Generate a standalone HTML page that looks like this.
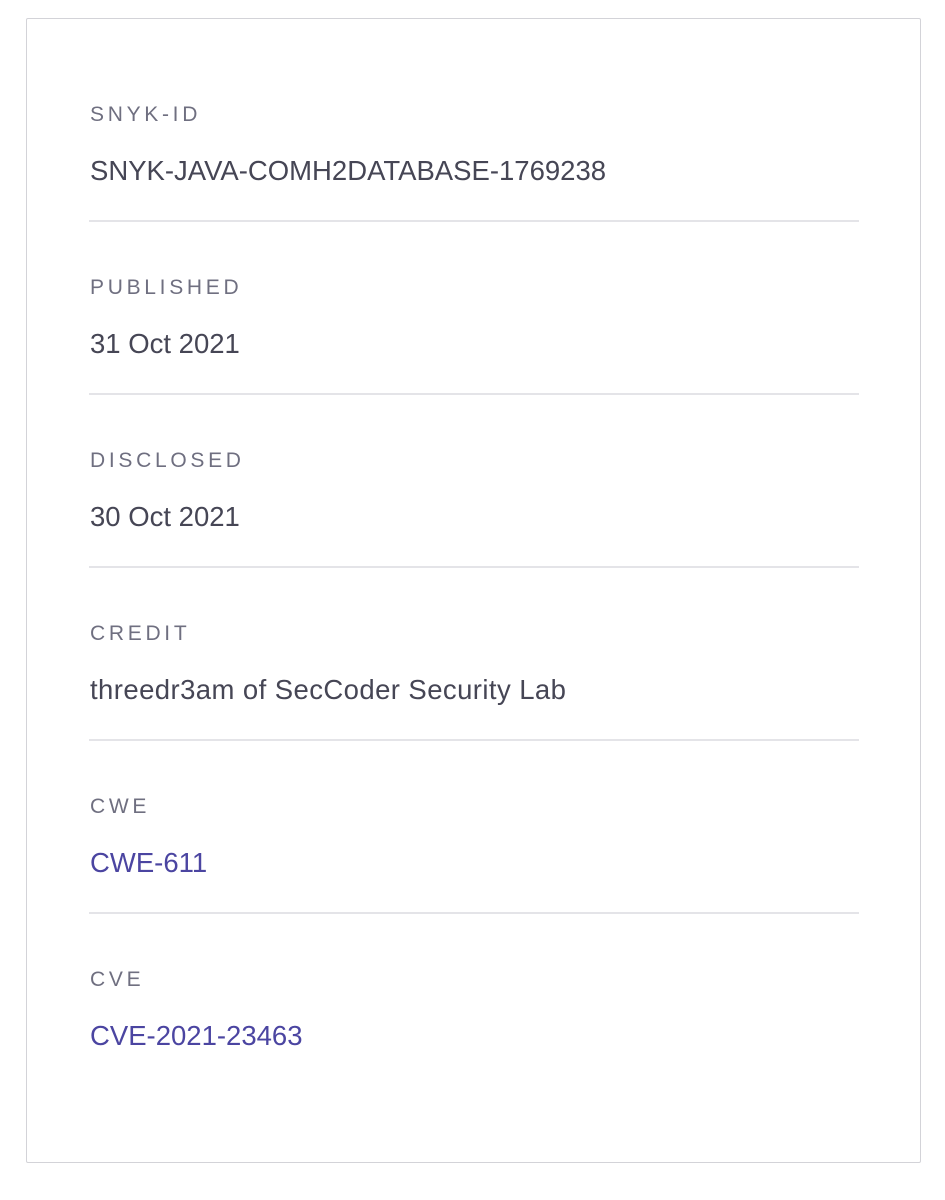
<!DOCTYPE html>
<html><head><meta charset="utf-8"><style>
html,body{margin:0;padding:0;background:#fff;width:945px;height:1200px;overflow:hidden;font-family:"Liberation Sans",sans-serif}
.box{position:absolute;left:26px;top:18px;width:895px;height:1145px;border:1px solid #d3d3d8;border-radius:2px;box-sizing:border-box}
.l{position:absolute;left:90px;font-size:21px;letter-spacing:3.7px;color:#6f6f80;line-height:1}
.v{position:absolute;left:90px;font-size:27.5px;color:#464655;line-height:1}
.a{color:#4b45a1}
.d{position:absolute;left:89px;width:770px;height:2px;background:#e4e4e8}
</style></head><body>
<div class="box"></div>
<div class="l" style="top:104px">SNYK-ID</div>
<div class="v" style="top:157px">SNYK-JAVA-COMH2DATABASE-1769238</div>
<div class="d" style="top:220px"></div>
<div class="l" style="top:277px">PUBLISHED</div>
<div class="v" style="top:330px">31 Oct 2021</div>
<div class="d" style="top:393px"></div>
<div class="l" style="top:450px">DISCLOSED</div>
<div class="v" style="top:503px">30 Oct 2021</div>
<div class="d" style="top:566px"></div>
<div class="l" style="top:623px">CREDIT</div>
<div class="v" style="top:676px;letter-spacing:0.42px">threedr3am of SecCoder Security Lab</div>
<div class="d" style="top:739px"></div>
<div class="l" style="top:796px">CWE</div>
<div class="v a" style="top:849px">CWE-611</div>
<div class="d" style="top:912px"></div>
<div class="l" style="top:969px">CVE</div>
<div class="v a" style="top:1022px">CVE-2021-23463</div>
</body></html>
